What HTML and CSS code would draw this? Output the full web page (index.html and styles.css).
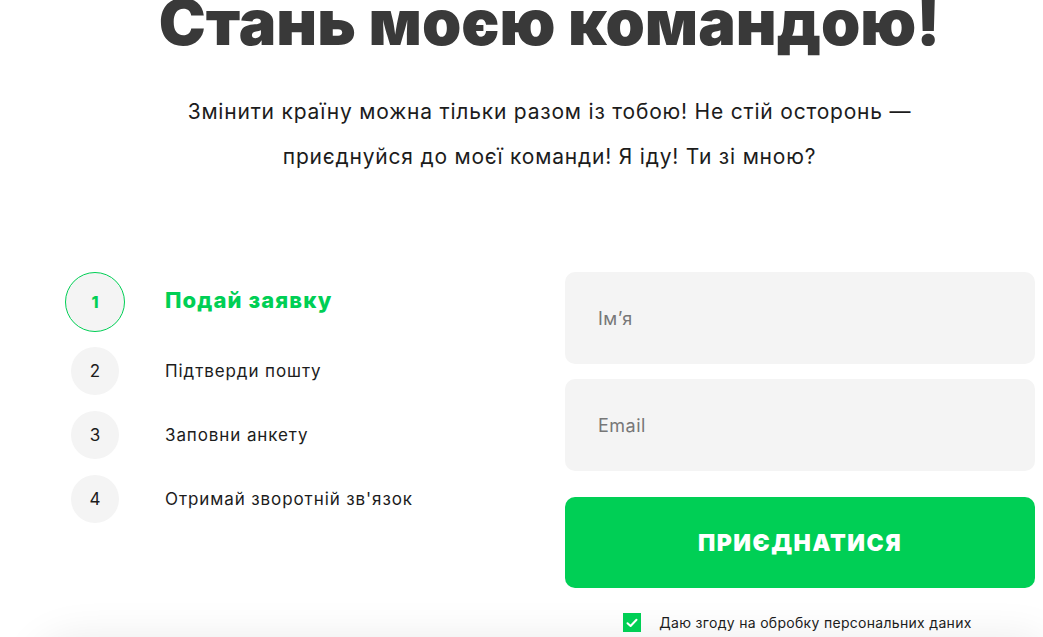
FILE: index.html
```html
<!DOCTYPE html>
<html>
	<head>
		<meta charset="UTF-8">
		<title>Стань моєю командою!</title>
		<link rel="stylesheet" href="styles.css">
	</head>
	<body>
		<div class="hero">
			<h1 class="title">Стань моєю командою!</h1>
			<p class="lead">Змінити країну можна тільки разом із тобою! Не стій осторонь —<br>приєднуйся до моєї команди! Я іду! Ти зі мною?</p>
		</div>

		<div class="join">
			<ul class="steps">
				<li class="step active"><span class="num">1</span><span class="label">Подай заявку</span></li>
				<li class="step"><span class="num">2</span><span class="label">Підтверди пошту</span></li>
				<li class="step"><span class="num">3</span><span class="label">Заповни анкету</span></li>
				<li class="step"><span class="num">4</span><span class="label">Отримай зворотній зв'язок</span></li>
			</ul>

			<form class="form" onsubmit="return false;">
				<input class="field" type="text" placeholder="Ім’я">
				<input class="field" type="email" placeholder="Email">
				<button class="btn" type="submit">Приєднатися</button>
				<label class="agree">
					<span class="check">
						<svg width="12" height="10" viewBox="0 0 12 10"><path d="M1.5 5.2 L4.6 8 L10.5 1.8" fill="none" stroke="#fff" stroke-width="2" stroke-linecap="round" stroke-linejoin="round"/></svg>
					</span>
					Даю згоду на обробку персональних даних
				</label>
			</form>
		</div>

		<div class="next"></div>
	</body>
</html>
```

FILE: styles.css
```css
body{
	margin: 0;
	background: #fff;
	font-family: Inter, "Open Sans", sans-serif;
	color: #1c1c1c;
	overflow: hidden;
}
.hero{
	text-align: center;
	padding-left: 56px;
}
.title{
	margin: -11px 0 0;
	font-size: 63px;
	line-height: 66px;
	font-weight: 900;
	color: #393939;
	letter-spacing: 0;
}
.lead{
	margin: 34px 0 0;
	font-size: 21px;
	line-height: 45px;
	letter-spacing: 0.8px;
	color: #1c1c1c;
}
.join{
	display: flex;
	margin-top: 93px;
	padding-left: 65px;
}
.steps{
	list-style: none;
	margin: 0;
	padding: 0;
	width: 500px;
	display: flex;
	flex-direction: column;
	gap: 16px;
}
.step{
	display: flex;
	align-items: center;
	gap: 40px;
	height: 48px;
	font-size: 17px;
	letter-spacing: 0.9px;
	color: #1c1c1c;
}
.step .num{
	width: 48px;
	height: 48px;
	margin: 0 6px;
	border-radius: 50%;
	background: #f4f4f4;
	display: flex;
	align-items: center;
	justify-content: center;
	font-size: 17px;
	letter-spacing: 0;
}
.step.active{
	height: 60px;
	margin-bottom: -1px;
}
.step.active .num{
	width: 58px;
	height: 58px;
	margin: 0;
	border: 1px solid #00cf55;
	color: #00cf55;
	font-weight: 800;
	font-size: 16px;
}
.step.active .label{
	color: #00cf55;
	font-weight: 800;
	font-size: 22px;
	letter-spacing: 1.1px;
	margin-top: -4px;
}
.form{
	width: 470px;
	display: flex;
	flex-direction: column;
	gap: 15px;
}
.field{
	height: 92px;
	border: 0;
	border-radius: 10px;
	background: #f4f4f4;
	padding: 0 33px;
	font-family: inherit;
	font-size: 18px;
	letter-spacing: 0.5px;
	color: #333;
	outline: none;
	box-sizing: border-box;
}
.field::placeholder{
	color: #777;
}
.btn{
	margin-top: 11px;
	height: 91px;
	border: 0;
	border-radius: 10px;
	background: #00cf55;
	color: #fff;
	font-family: inherit;
	font-size: 23px;
	font-weight: 900;
	text-transform: uppercase;
	letter-spacing: 1.5px;
	cursor: pointer;
}
.agree{
	margin-top: 10px;
	display: flex;
	align-items: center;
	justify-content: center;
	gap: 18px;
	font-size: 14px;
	letter-spacing: 0.3px;
	color: #1c1c1c;
	padding-right: 5px;
}
.check{
	width: 18px;
	height: 19px;
	background: #00cf55;
	display: flex;
	align-items: center;
	justify-content: center;
}
.next{
	margin: 12px 0 0 35px;
	height: 200px;
	border-radius: 40px 0 0 0;
	background: #fff;
	box-shadow: 0 -4px 45px rgba(0,0,0,0.09);
}
```
